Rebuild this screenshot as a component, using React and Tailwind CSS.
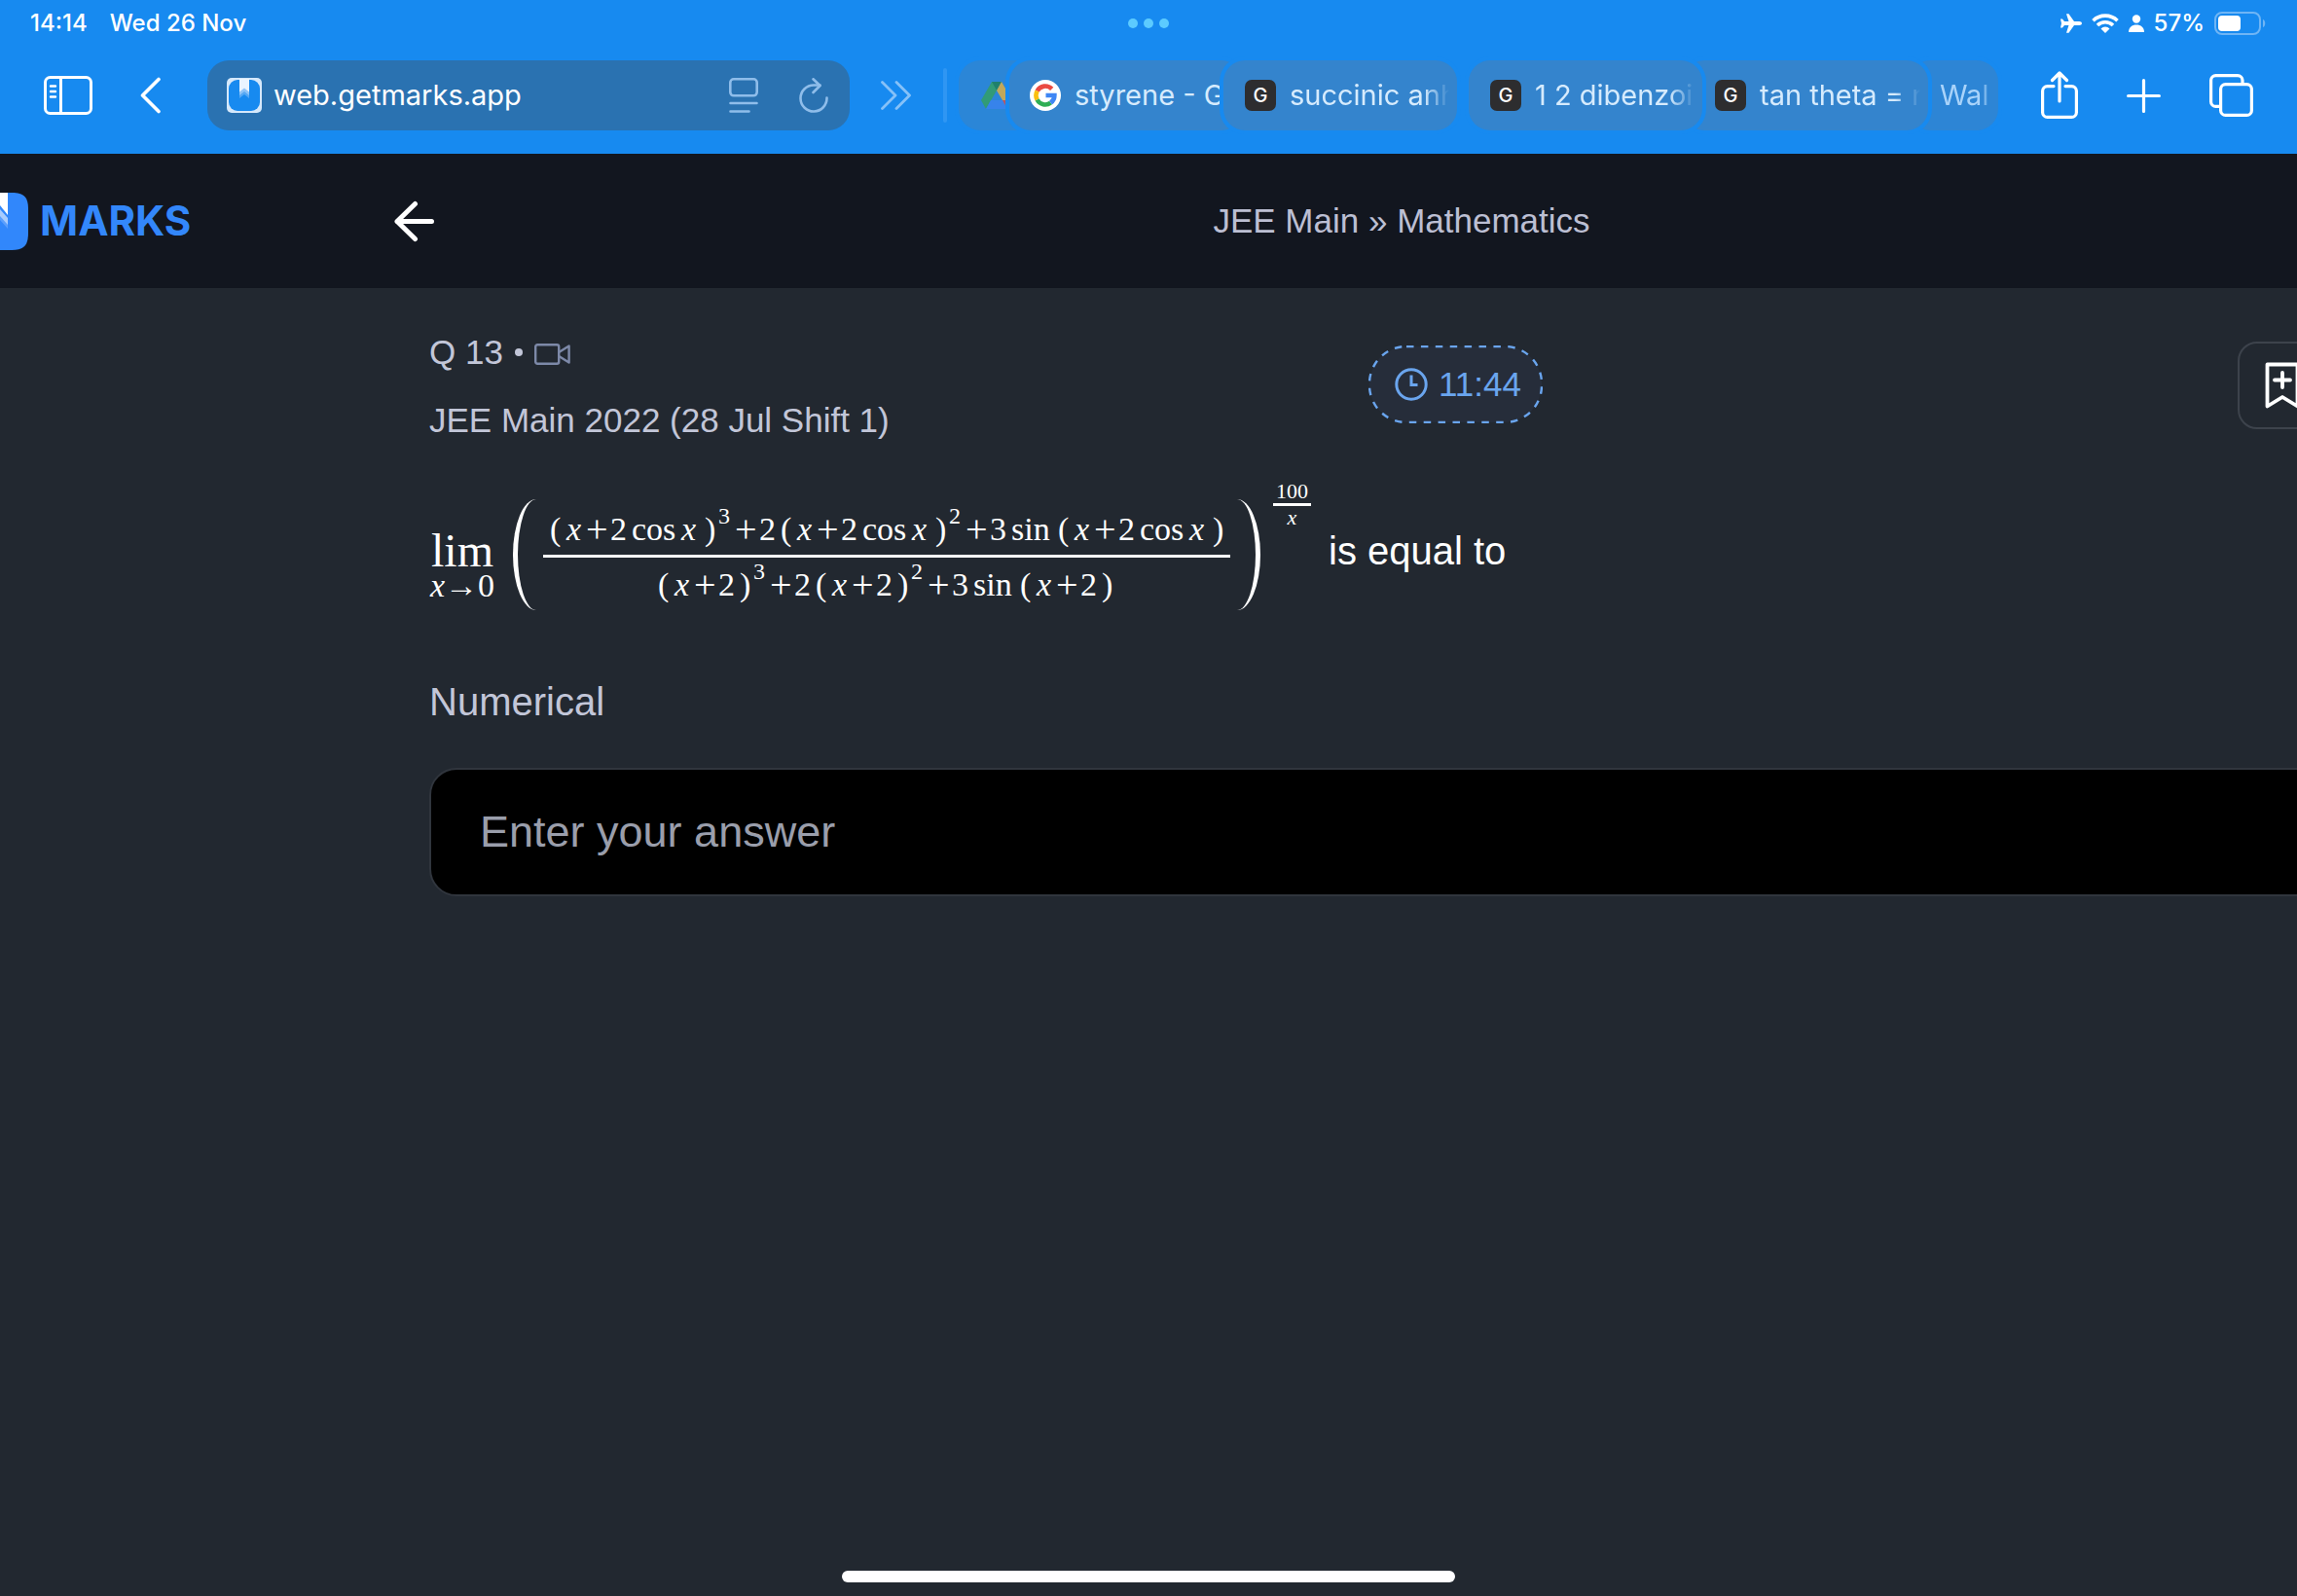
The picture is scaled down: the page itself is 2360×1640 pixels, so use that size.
import React from "react";

const SANS = "font-['Liberation_Sans',Arial,sans-serif]";
const SYSTEM = "font-['Inter',sans-serif]";

function StatusBar() {
  return (
    <div className="grid h-12 grid-cols-3 items-center px-[31px] text-[24px] font-medium leading-6">
      <div className="flex gap-[23px]">
        <span>14:14</span>
        <span>Wed 26 Nov</span>
      </div>
      <div className="flex justify-center gap-[6px]">
        <span className="size-[10px] rounded-full bg-[#5ccbff]" />
        <span className="size-[10px] rounded-full bg-[#5ccbff]" />
        <span className="size-[10px] rounded-full bg-[#5ccbff]" />
      </div>
      <div className="flex items-center justify-end gap-[10px]">
        <svg className="h-5 w-[22px]" viewBox="0 0 22 20" fill="currentColor" aria-hidden="true">
          <path d="M22 10c0 1.300-1.200 2-2.800 2H14l-5.500 7.800H6L8.500 12H4l-2 2.500H0L1 10 0 5.500h2L4 8h4.500L6 .2h2.500L14 8h5.200c1.600 0 2.800.7 2.800 2z" />
        </svg>
        <svg className="h-5 w-7" viewBox="0 0 28 20" fill="none" stroke="currentColor" strokeWidth="3.600" aria-hidden="true">
          <path d="M1.500 7.200a18 18 0 0 1 25 0" />
          <path d="M6 12a11.500 11.500 0 0 1 16 0" />
          <path d="M14 20l-4.500-4.600a6.500 6.500 0 0 1 9 0z" fill="currentColor" stroke="none" />
        </svg>
        <svg className="h-[18px] w-4" viewBox="0 0 16 18" fill="currentColor" aria-hidden="true">
          <circle cx="8" cy="4.500" r="4.200" />
          <path d="M0 18c0-5 3.500-7.500 8-7.500s8 2.500 8 7.500z" />
        </svg>
        <span>57%</span>
        <svg className="h-6 w-[54px]" viewBox="0 0 54 24" fill="none" aria-hidden="true">
          <rect x="1" y="1" width="46" height="22" rx="7" stroke="#6fb5f5" strokeWidth="2" />
          <rect x="4" y="4" width="23" height="16" rx="4" fill="white" />
          <path d="M50 8c3 1 3 7 0 8z" fill="#6fb5f5" />
        </svg>
      </div>
    </div>
  );
}

function GFavicon() {
  return (
    <span className="flex size-8 shrink-0 items-center justify-center rounded-[7px] bg-[#2d2d2f] text-[20px] font-medium leading-6 text-white">
      G
    </span>
  );
}

function GoogleFavicon() {
  return (
    <svg className="size-8 shrink-0" viewBox="0 0 32 32" fill="none" aria-hidden="true">
      <circle cx="16" cy="16" r="16" fill="white" />
      <g strokeWidth="4.600">
        <path d="M7.600 11.500A9.500 9.500 0 0 1 22.700 9.300" stroke="#ea4a42" />
        <path d="M7.600 20.500A9.500 9.500 0 0 1 7.600 11.500" stroke="#fbc010" />
        <path d="M7.600 20.500A9.500 9.500 0 0 0 21.500 23.700" stroke="#2fae55" />
        <path d="M21.500 23.700A9.500 9.500 0 0 0 25.400 16H16.500" stroke="#3f86f4" />
      </g>
    </svg>
  );
}

function DriveFavicon() {
  return (
    <svg className="h-7 w-8 shrink-0 opacity-80" viewBox="0 0 32 28" aria-hidden="true">
      <path d="M11 0h10l-5 9-11 19-5-9z" fill="#34a060" />
      <path d="M11 0h10l-5 9z" fill="#1d7f52" />
      <path d="M21 0l11 19H22l-6-10z" fill="#e6b13c" />
      <path d="M5 28l5-9h22l-5 9z" fill="#3b82f0" />
      <path d="M22 19h10l-5 9z" fill="#dd4b45" />
    </svg>
  );
}

function Tab({ className, icon, title, titleClass = "", label = title }) {
  return (
    <button
      type="button"
      aria-label={label}
      className={`flex h-[72px] shrink-0 items-center gap-[14px] overflow-hidden rounded-[22px] text-left ring-4 ring-[#178af0] ${className}`}
    >
      {icon}
      {title && (
        <span className={`min-w-0 flex-1 overflow-hidden whitespace-nowrap ${titleClass}`}>{title}</span>
      )}
    </button>
  );
}

const FADE = "[mask-image:linear-gradient(to_right,black_84%,transparent)]";

function Toolbar() {
  return (
    <div className="flex h-[110px] items-center px-[45px] pb-[10px] text-[29px] leading-9">
      <button type="button" aria-label="Show sidebar" className="mr-[49px]">
        <svg className="h-10 w-[50px]" viewBox="0 0 50 40" fill="none" stroke="currentColor" strokeWidth="3" strokeLinecap="round" aria-hidden="true">
          <rect x="1.500" y="1.500" width="47" height="37" rx="5" />
          <path d="M17.500 1.500v37" />
          <path d="M7 10.500h5M7 16h5M7 21.500h5" strokeWidth="2.400" />
        </svg>
      </button>
      <button type="button" aria-label="Back" className="mr-12">
        <svg className="h-[38px] w-[21px]" viewBox="0 0 21 38" fill="none" stroke="currentColor" strokeWidth="3.600" strokeLinecap="round" strokeLinejoin="round" aria-hidden="true">
          <path d="M19 2.500L2.500 19 19 35.500" />
        </svg>
      </button>
      <div className="mr-8 flex h-[72px] w-[660px] shrink-0 items-center rounded-[22px] bg-[#2a72b1] pl-5 pr-[22px]">
        <svg className="mr-3 size-9" viewBox="0 0 36 36" aria-hidden="true">
          <rect width="36" height="36" rx="5" fill="#d5e8fb" />
          <rect x="2" y="2" width="32" height="32" rx="9" fill="#178af0" />
          <path d="M13 1h10v20l-5-4-5 4z" fill="#55a8f4" />
          <path d="M13 1h10v17l-5-4-5 4z" fill="#8fc4f8" />
          <path d="M13 1h10v13.500l-5-4-5 4z" fill="#eaf4ff" />
        </svg>
        <input
          aria-label="Address"
          defaultValue="web.getmarks.app"
          className="min-w-0 flex-1 bg-transparent outline-none"
        />
        <button type="button" aria-label="Page menu" className="mr-[42px] text-[#8fbdea]">
          <svg className="h-9 w-[30px]" viewBox="0 0 30 36" fill="none" stroke="currentColor" strokeWidth="2.600" strokeLinecap="round" aria-hidden="true">
            <rect x="1.300" y="1.300" width="27.400" height="17" rx="3.500" />
            <path d="M1.500 26h27M1.500 34.500h19" />
          </svg>
        </button>
        <button type="button" aria-label="Reload" className="text-[#8fbdea]">
          <svg className="h-9 w-[30px]" viewBox="0 0 30 36" fill="none" stroke="currentColor" strokeWidth="2.600" strokeLinecap="round" strokeLinejoin="round" aria-hidden="true">
            <path d="M28.500 20.500A13.500 13.500 0 1 1 15 7.500h6.500" />
            <path d="M14.500 1.300L21.500 8 14.500 15" />
          </svg>
        </button>
      </div>
      <button type="button" aria-label="More" className="mr-[33px] text-[#86c1f8]">
        <svg className="h-[30px] w-[31px]" viewBox="0 0 31 30" fill="none" stroke="currentColor" strokeWidth="2.800" strokeLinecap="round" strokeLinejoin="round" aria-hidden="true">
          <path d="M1.500 1.500L15 15 1.500 28.500M16 1.500L29.500 15 16 28.500" />
        </svg>
      </button>
      <span className="mr-3 h-14 w-1 rounded-full bg-[#2f96f3]" />
      <nav aria-label="Tabs" className="isolate mr-[45px] flex min-w-0 flex-1 text-[#d6ebfd]">
        <Tab className="w-[92px] bg-[#2b86d7] pl-[23px]" icon={<DriveFavicon />} label="Drive" />
        <Tab className="z-10 -ml-10 w-[240px] bg-[#3484cd] pl-[21px] pr-6" icon={<GoogleFavicon />} title="styrene - G" />
        <Tab className="z-20 -ml-5 w-[240px] bg-[#3484cd] pl-[22px] pr-2" icon={<GFavicon />} title="succinic anh" titleClass={FADE} />
        <Tab className="z-20 ml-3 w-[240px] bg-[#3484cd] pl-[22px] pr-2" icon={<GFavicon />} title="1 2 dibenzoi" titleClass={FADE} />
        <Tab className="z-10 -ml-5 w-[252px] bg-[#3484cd] pl-[33px] pr-2" icon={<GFavicon />} title="tan theta = r" titleClass={FADE} />
        <Tab className="-ml-5 w-[92px] bg-[#2d85d5] pl-8 pr-2 text-[#a9d3fa]" title="Wal" titleClass={FADE} />
      </nav>
      <button type="button" aria-label="Share" className="mr-[50px]">
        <svg className="h-[50px] w-[38px]" viewBox="0 0 38 50" fill="none" stroke="currentColor" strokeWidth="3.200" strokeLinecap="round" strokeLinejoin="round" aria-hidden="true">
          <path d="M13 15.600H6.600a5 5 0 0 0-5 5v21.800a5 5 0 0 0 5 5h24.800a5 5 0 0 0 5-5V20.600a5 5 0 0 0-5-5H25" />
          <path d="M19 31V2.500M11.500 9.500L19 2 26.500 9.500" />
        </svg>
      </button>
      <button type="button" aria-label="New tab" className="mr-[50px]">
        <svg className="size-[35px]" viewBox="0 0 35 35" fill="none" stroke="currentColor" strokeWidth="3.200" strokeLinecap="round" aria-hidden="true">
          <path d="M17.500 1.600v31.800M1.600 17.500h31.800" />
        </svg>
      </button>
      <button type="button" aria-label="Show all tabs">
        <svg className="h-11 w-[45px]" viewBox="0 0 45 44" fill="none" stroke="currentColor" strokeWidth="3.200" aria-hidden="true">
          <rect x="11.600" y="10.600" width="31.800" height="31.800" rx="5" />
          <path d="M11 33.400H6.600a5 5 0 0 1-5-5V6.600a5 5 0 0 1 5-5H29a5 5 0 0 1 5 5V10" />
        </svg>
      </button>
    </div>
  );
}

function AppHeader() {
  return (
    <div className="flex h-[138px] items-center overflow-hidden bg-[#12161f]">
      <a href="#home" className="flex w-[403px] shrink-0 items-center gap-3 text-[#3387fb]">
        <svg className="h-[60px] w-[29px]" viewBox="0 0 29 60" aria-hidden="true">
          <path d="M0 1h12c13 0 17 5 17 17v24c0 13-4 18-17 18H0z" fill="#3187fb" />
          <path d="M0 23l8 10v5L0 29z" fill="#5b9ffc" />
          <path d="M0 18l8 9v7L0 25z" fill="#a9ccfd" />
          <path d="M0 1h8v23L0 14z" fill="white" />
        </svg>
        <span className={`text-[42px] font-bold leading-[48px] ${SYSTEM}`}>MARKS</span>
      </a>
      <button type="button" aria-label="Go back" className="text-white">
        <svg className="h-11 w-[45px]" viewBox="0 0 45 44" fill="none" stroke="currentColor" strokeWidth="5" strokeLinecap="round" strokeLinejoin="round" aria-hidden="true">
          <path d="M40.500 22.500H5M23.500 4.500L5 22.500l18.500 18" />
        </svg>
      </button>
      <p className="-mr-[72px] flex-1 text-center text-[35px] leading-[48px] text-[#bcbfd3]">
        JEE Main » Mathematics
      </p>
    </div>
  );
}

const X = ({ w = "w-5" }) => <i className={w}>x</i>;
const Plus = () => <span className="w-[25px] text-[40px]">+</span>;
const Open = () => <span className="w-[17px]">(</span>;
const Close = () => <span className="w-[14px]">)</span>;
const Sup = ({ children }) => <span className="w-[17px] self-start text-[24px] !leading-6">{children}</span>;
const Two = () => <span className="w-[22px]">2</span>;

function Sum({ cos }) {
  return (
    <>
      <Open />
      <X />
      <Plus />
      <Two />
      {cos && (
        <>
          <span className="w-[51px]">cos</span>
          <X w="w-6" />
        </>
      )}
      <Close />
    </>
  );
}

function Polynomial({ cos = false }) {
  return (
    <div className="flex h-[46px] items-end *:leading-10">
      <Sum cos={cos} />
      <Sup>3</Sup>
      <Plus />
      <Two />
      <Sum cos={cos} />
      <Sup>2</Sup>
      <Plus />
      <span className="w-[22px]">3</span>
      <span className="w-12">sin</span>
      <Sum cos={cos} />
    </div>
  );
}

function Question() {
  return (
    <div className="mt-[37px] flex h-[153px] items-center font-['Liberation_Serif',serif] text-[34px] text-white">
      <div className="mt-6 flex w-[68px] flex-col items-center">
        <span className="text-[48px] leading-10">lim</span>
        <span className="flex leading-8">
          <i>x</i>
          <span>→</span>
          <span>0</span>
        </span>
      </div>
      <span className="ml-[18px] h-[114px] w-6 rounded-l-[100%_50%] border-l-[5px] border-white" />
      <div className="ml-[7px] flex flex-col items-center">
        <div className="pb-[6px] pl-[7px] pr-1">
          <Polynomial cos />
        </div>
        <div className="h-[3px] w-full bg-white" />
        <div className="pt-[2px]">
          <Polynomial />
        </div>
      </div>
      <span className="ml-[7px] h-[114px] w-6 rounded-r-[100%_50%] border-r-[5px] border-white" />
      <div className="ml-[13px] flex w-[39px] flex-col items-center self-start text-[22px] leading-6">
        <span>100</span>
        <span className="h-[3px] w-full bg-white" />
        <i>x</i>
      </div>
      <span className={`mb-2 ml-[18px] whitespace-nowrap text-[40px] leading-[48px] ${SANS}`}>is equal to</span>
    </div>
  );
}

export default function App() {
  return (
    <div className={`flex min-h-screen flex-col overflow-x-hidden bg-[#222830] ${SANS}`}>
      <header className={`bg-[#178af0] text-white ${SYSTEM}`}>
        <StatusBar />
        <Toolbar />
      </header>
      <AppHeader />
      <main className="flex-1 overflow-hidden pl-[441px] pt-[42px]">
        <div className="flex items-start">
          <div className="flex w-[965px] shrink-0 flex-col gap-[22px] text-[35px] leading-[48px] text-[#c2c6d8]">
            <p className="flex items-center gap-3">
              <span>Q 13</span>
              <span className="size-2 rounded-full bg-[#c2c6d8]" />
              <svg className="mt-1 h-[22px] w-[37px]" viewBox="0 0 37 22" fill="none" stroke="#7d89a8" strokeWidth="2.400" strokeLinejoin="round" aria-hidden="true">
                <rect x="1.200" y="1.200" width="24" height="19.600" rx="2" />
                <path d="M25.200 9L35.600 2.500v17l-10.400-6.500" />
              </svg>
            </p>
            <h1>JEE Main 2022 (28 Jul Shift 1)</h1>
          </div>
          <div className="mt-[17px] text-[#6aa5ee]">
            <div className="relative flex h-20 w-[179px] items-center gap-[11px] pl-[27px] text-[35px] leading-[48px]">
              <svg className="absolute inset-0 size-full" viewBox="0 0 179 80" fill="none" aria-hidden="true">
                <rect x="1" y="1" width="177" height="78" rx="38" fill="#262d3a" stroke="currentColor" strokeWidth="2.400" strokeDasharray="7.500 7.400" />
              </svg>
              <svg className="relative size-[34px]" viewBox="0 0 34 34" fill="none" stroke="currentColor" strokeWidth="3" aria-hidden="true">
                <circle cx="17" cy="17" r="15.200" />
                <path d="M17 7.500V17.500h6.500" />
              </svg>
              <time className="relative">11:44</time>
            </div>
          </div>
          <button
            type="button"
            aria-label="Bookmark question"
            className="-mr-20 ml-auto mt-[13px] flex h-[90px] w-[141px] shrink-0 items-center rounded-[20px] border-2 border-[#3d434c] pl-[26px] text-white"
          >
            <svg className="h-12 w-9" viewBox="0 0 36 48" fill="none" stroke="currentColor" strokeWidth="3.800" strokeLinecap="round" strokeLinejoin="round" aria-hidden="true">
              <path d="M2.500 2.500h31v43L18 36 2.500 45.500z" />
              <path d="M18 11v15M10 18.500h16" />
            </svg>
          </button>
        </div>
        <Question />
        <label htmlFor="answer" className="mt-[51px] block text-[40px] leading-[48px] text-[#c2c6d8]">
          Numerical
        </label>
        <div className="-mr-10 mt-11 flex">
          <input
            id="answer"
            type="text"
            placeholder="Enter your answer"
            className="h-[132px] min-w-0 flex-1 rounded-[28px] border-2 border-[#30353d] bg-black pl-[50px] text-[45px] leading-[56px] text-white outline-none placeholder:text-[#9a9eab]"
          />
        </div>
      </main>
      <footer className="flex justify-center pb-[14px]">
        <div className="h-3 w-[630px] rounded-full bg-white" />
      </footer>
    </div>
  );
}
